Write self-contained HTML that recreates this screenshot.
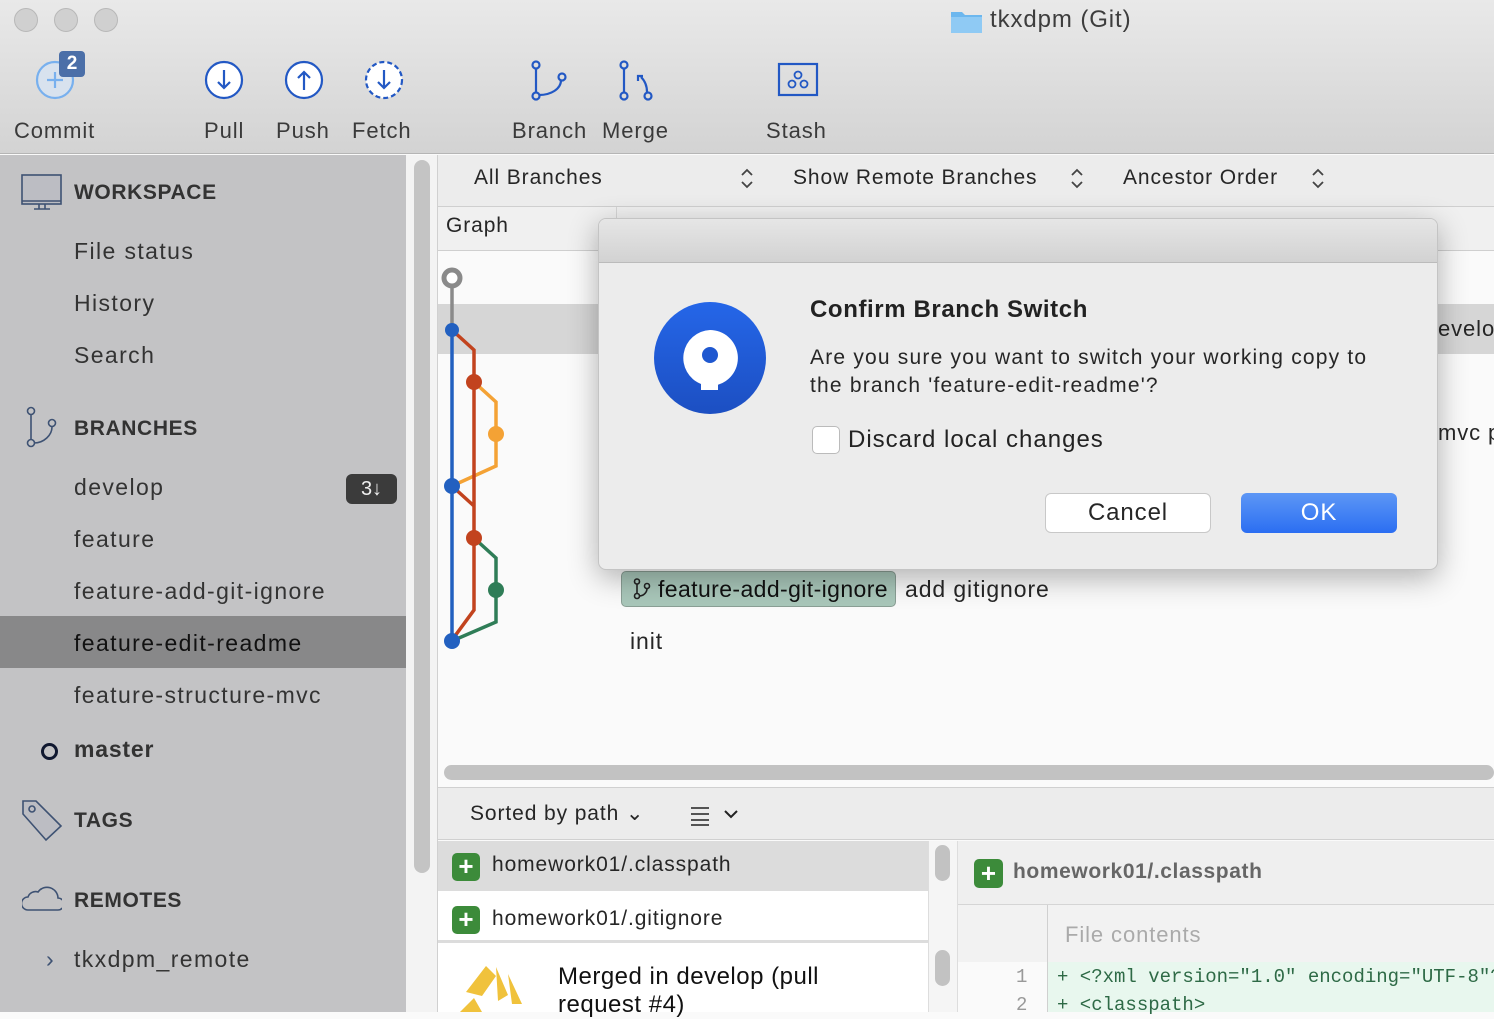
<!DOCTYPE html>
<html><head><meta charset="utf-8"><style>
*{box-sizing:border-box;margin:0;padding:0}
body{width:1494px;height:1012px;overflow:hidden;font-family:"Liberation Sans",sans-serif;background:#fafafa;position:relative;color:#262626;letter-spacing:.9px}
.abs{position:absolute;white-space:nowrap}
#top{left:0;top:0;width:1494px;height:154px;background:linear-gradient(#e9e9e9,#d3d3d3);border-bottom:1px solid #b5b5b5}
.dot{width:24px;height:24px;border-radius:50%;background:#d0d0d0;border:1px solid #b8b8b8;top:8px}
.tl{font-size:22px;color:#3a3a3a;top:118px}
#side{left:0;top:155px;width:406px;height:857px;background:#c3c3c5}
.si{font-size:23px;color:#333;left:74px;letter-spacing:1.4px}
.hd{font-weight:bold;font-size:21px;color:#333;left:74px;letter-spacing:.6px}
</style></head><body>
<div id="top" class="abs"></div>
<div class="abs dot" style="left:14px"></div><div class="abs dot" style="left:54px"></div><div class="abs dot" style="left:94px"></div>
<svg class="abs" style="left:950px;top:8px" width="34" height="26"><path d="M1 4h11l3 3h17v18H1z" fill="#6cb7ee"/><path d="M1 9h31v16H1z" fill="#8fcaf4"/></svg>
<div class="abs" style="left:990px;top:6px;font-size:24px;color:#3d3d3d">tkxdpm (Git)</div>
<svg class="abs" style="left:0;top:45px" width="840" height="65" fill="none" stroke="#2258c4" stroke-width="2.2">
<circle cx="55" cy="35" r="18" stroke="#78b0ee" fill="#d8e2ee"/><path d="M55 27v16M47 35h16" stroke="#78b0ee"/>
<circle cx="224" cy="35" r="18" fill="#fff"/><path d="M224 25v18M218 37l6 6 6-6"/>
<circle cx="304" cy="35" r="18" fill="#fff"/><path d="M304 45v-18M298 33l6-6 6 6"/>
<circle cx="384" cy="35" r="18" fill="#fff" stroke-dasharray="5 3"/><path d="M384 25v18M378 37l6 6 6-6"/>
<circle cx="536" cy="20" r="3.5"/><circle cx="536" cy="51" r="3.5"/><circle cx="562" cy="32" r="3.5"/><path d="M536 24v23M539 50c12 0 22-6 22-15"/>
<circle cx="624" cy="20" r="3.5"/><circle cx="624" cy="51" r="3.5"/><circle cx="648" cy="51" r="3.5"/><path d="M624 24v23M647 47c0-7-3-12-6-15M638 36v-5h5"/>
<rect x="779" y="19" width="38" height="31"/><circle cx="798" cy="30" r="3.5" stroke-width="1.8"/><circle cx="792" cy="39" r="3.5" stroke-width="1.8"/><circle cx="804" cy="39" r="3.5" stroke-width="1.8"/>
</svg>
<div class="abs" style="left:59px;top:51px;width:26px;height:26px;border-radius:4px;background:#4b6fa8;color:#fff;font-weight:bold;font-size:19px;text-align:center;line-height:26px;letter-spacing:0">2</div>
<div class="abs tl" style="left:14px">Commit</div><div class="abs tl" style="left:204px">Pull</div><div class="abs tl" style="left:276px">Push</div><div class="abs tl" style="left:352px">Fetch</div><div class="abs tl" style="left:512px">Branch</div><div class="abs tl" style="left:602px">Merge</div><div class="abs tl" style="left:766px">Stash</div>

<div id="side" class="abs"></div>
<svg class="abs" style="left:20px;top:172px" width="44" height="40" fill="none" stroke="#3e5273" stroke-width="1.6"><rect x="2" y="3" width="39" height="29" fill="#bcbdc3"/><path d="M2 29h39M14 37h16M19 32v5M25 32v5"/></svg>
<div class="abs hd" style="top:181px">WORKSPACE</div>
<div class="abs si" style="top:238px">File status</div><div class="abs si" style="top:290px">History</div><div class="abs si" style="top:342px">Search</div>
<svg class="abs" style="left:22px;top:405px" width="40" height="45" fill="none" stroke="#3e5273" stroke-width="1.6"><circle cx="9" cy="6" r="3.5"/><circle cx="9" cy="38" r="3.5"/><circle cx="30" cy="18" r="3.5"/><path d="M9 10v24M12 38c10 0 18-8 18-16"/></svg>
<div class="abs hd" style="top:417px">BRANCHES</div>
<div class="abs si" style="top:474px">develop</div>
<div class="abs" style="left:346px;top:474px;width:51px;height:30px;border-radius:6px;background:#3b3b3b;color:#eee;font-size:20px;text-align:center;line-height:30px;letter-spacing:0">3↓</div>
<div class="abs si" style="top:526px">feature</div><div class="abs si" style="top:578px">feature-add-git-ignore</div>
<div class="abs" style="left:0;top:616px;width:406px;height:52px;background:#888889"></div>
<div class="abs si" style="top:630px;color:#111">feature-edit-readme</div>
<div class="abs si" style="top:682px">feature-structure-mvc</div>
<div class="abs" style="left:41px;top:743px;width:17px;height:17px;border-radius:50%;border:3.5px solid #101830"></div>
<div class="abs si" style="top:736px;font-weight:bold;letter-spacing:.8px">master</div>
<svg class="abs" style="left:20px;top:798px" width="44" height="44" fill="none" stroke="#3e5273" stroke-width="1.6"><path d="M3 3h13l25 25-15 14L3 16z" fill="#bcbdc3"/><circle cx="12" cy="11" r="3"/></svg>
<div class="abs hd" style="top:809px">TAGS</div>
<svg class="abs" style="left:22px;top:884px" width="40" height="30" fill="none" stroke="#3e5273" stroke-width="1.6"><path d="M6 26h30a6 6 0 0 0 0-12 11 11 0 0 0-20-6 8 8 0 0 0-10 5 6.5 6.5 0 0 0 0 13z"/></svg>
<div class="abs hd" style="top:889px">REMOTES</div>
<div class="abs si" style="left:46px;top:946px;color:#3e5273">›</div>
<div class="abs si" style="top:946px">tkxdpm_remote</div>

<div class="abs" style="left:406px;top:155px;width:32px;height:857px;background:#f3f3f3;border-right:1px solid #d0d0d0"></div>
<div class="abs" style="left:414px;top:160px;width:16px;height:713px;border-radius:8px;background:#c4c4c4"></div>

<div class="abs" style="left:438px;top:155px;width:1056px;height:52px;background:#ececec;border-bottom:1px solid #cfcfcf"></div>
<div class="abs" style="left:474px;top:166px;font-size:21px">All Branches</div>
<div class="abs" style="left:793px;top:166px;font-size:21px">Show Remote Branches</div>
<div class="abs" style="left:1123px;top:166px;font-size:21px">Ancestor Order</div>
<svg class="abs" style="left:738px;top:166px" width="600" height="26" fill="none" stroke="#444" stroke-width="1.8"><path d="M4 9l5-5 5 5M4 16l5 5 5-5M334 9l5-5 5 5M334 16l5 5 5-5M575 9l5-5 5 5M575 16l5 5 5-5"/></svg>
<div class="abs" style="left:438px;top:207px;width:1056px;height:44px;background:#f0f0f0;border-bottom:1px solid #cfcfcf"></div>
<div class="abs" style="left:616px;top:207px;width:1px;height:44px;background:#d5d5d5"></div>
<div class="abs" style="left:446px;top:214px;font-size:21px">Graph</div>
<div class="abs" style="left:438px;top:251px;width:1056px;height:510px;background:#fafafa"></div>
<div class="abs" style="left:438px;top:304px;width:1056px;height:50px;background:#d6d6d6"></div>
<div class="abs" style="left:1438px;top:316px;font-size:22px">evelo</div>
<div class="abs" style="left:1438px;top:420px;font-size:22px">mvc p</div>
<svg class="abs" style="left:438px;top:251px" width="80" height="410" fill="none" stroke-width="3.5">
<path d="M36 131l22 20v64l-44 20" stroke="#f4a235"/>
<path d="M36 287l22 20v64l-44 19" stroke="#2f7d57"/>
<path d="M14 79l22 20v260l-22 30M14 235l22 20" stroke="#c2431e"/>
<path d="M14 28v50" stroke="#8a8a8a"/>
<path d="M14 78v312" stroke="#2260c0"/>
<circle cx="14" cy="27" r="8" fill="#fff" stroke="#8a8a8a" stroke-width="5"/>
<g stroke="none"><circle cx="14" cy="79" r="7" fill="#2260c0"/><circle cx="14" cy="235" r="8" fill="#2260c0"/><circle cx="14" cy="390" r="8" fill="#2260c0"/>
<circle cx="36" cy="131" r="8" fill="#c2431e"/><circle cx="36" cy="287" r="8" fill="#c2431e"/><circle cx="58" cy="183" r="8" fill="#f4a235"/><circle cx="58" cy="339" r="8" fill="#2f7d57"/></g></svg>
<div class="abs" style="left:621px;top:571px;width:275px;height:36px;border-radius:5px;background:#a9c7ba;border:1px solid #8a9f95"></div>
<svg class="abs" style="left:632px;top:578px" width="20" height="22" fill="none" stroke="#222" stroke-width="1.6"><circle cx="5" cy="3.5" r="2.5"/><circle cx="5" cy="18" r="2.5"/><circle cx="15" cy="8" r="2.5"/><path d="M5 6v9.5M7 18c5 0 8-4 8-7.5"/></svg>
<div class="abs" style="left:658px;top:576px;font-size:23px;color:#111;letter-spacing:.4px">feature-add-git-ignore</div>
<div class="abs" style="left:905px;top:576px;font-size:23px">add gitignore</div>
<div class="abs" style="left:630px;top:628px;font-size:23px">init</div>
<div class="abs" style="left:444px;top:765px;width:1050px;height:15px;border-radius:8px;background:#c2c2c2"></div>
<div class="abs" style="left:438px;top:787px;width:1056px;height:53px;background:#ececec;border-top:1px solid #d0d0d0;border-bottom:1px solid #d0d0d0"></div>
<div class="abs" style="left:470px;top:801px;font-size:21px">Sorted by path ⌄</div>
<svg class="abs" style="left:690px;top:804px" width="50" height="22" fill="none" stroke="#222" stroke-width="2"><path d="M1 4h18M1 10h18M1 16h18M1 21h18" stroke-width="1.6"/><path d="M35 7l6 6 6-6"/></svg>
<div class="abs" style="left:438px;top:841px;width:490px;height:171px;background:#fff"></div>
<div class="abs" style="left:438px;top:841px;width:490px;height:50px;background:#dcdcdc"></div>
<div class="abs" style="left:438px;top:940px;width:490px;height:3px;background:#dcdcdc"></div>
<div class="abs" style="left:928px;top:841px;width:30px;height:171px;background:#f5f5f5;border-left:1px solid #ddd;border-right:1px solid #ddd"></div>
<div class="abs" style="left:935px;top:845px;width:15px;height:36px;border-radius:8px;background:#c2c2c2"></div>
<div class="abs" style="left:935px;top:950px;width:15px;height:36px;border-radius:8px;background:#c2c2c2"></div>
<div class="abs" style="left:452px;top:853px;width:28px;height:28px;border-radius:5px;background:#3c8b3a;color:#fff;font-size:26px;font-weight:bold;text-align:center;line-height:27px;letter-spacing:0">+</div>
<div class="abs" style="left:452px;top:906px;width:28px;height:28px;border-radius:5px;background:#3c8b3a;color:#fff;font-size:26px;font-weight:bold;text-align:center;line-height:27px;letter-spacing:0">+</div>
<div class="abs" style="left:492px;top:853px;font-size:21px">homework01/.classpath</div>
<div class="abs" style="left:492px;top:907px;font-size:21px">homework01/.gitignore</div>
<svg class="abs" style="left:456px;top:962px" width="84" height="50"><path d="M10 30l20-26 10 10-14 20zM40 5l12 28-10 6zM4 50l14-14 8 14zM52 12l14 30-10 0z" fill="#f0c23c"/></svg>
<div class="abs" style="left:558px;top:963px;font-size:24px;line-height:28px;color:#111;letter-spacing:.5px">Merged in develop (pull<br>request #4)</div>
<div class="abs" style="left:958px;top:841px;width:536px;height:64px;background:#efefef;border-bottom:1px solid #d5d5d5"></div>
<div class="abs" style="left:974px;top:859px;width:29px;height:29px;border-radius:5px;background:#3c8b3a;color:#fff;font-size:26px;font-weight:bold;text-align:center;line-height:28px;letter-spacing:0">+</div>
<div class="abs" style="left:1013px;top:860px;font-size:21px;font-weight:bold;color:#666;letter-spacing:.6px">homework01/.classpath</div>
<div class="abs" style="left:958px;top:905px;width:536px;height:57px;background:#f2f2f2"></div>
<div class="abs" style="left:1047px;top:905px;width:1px;height:107px;background:#d0d0d0"></div>
<div class="abs" style="left:1065px;top:922px;font-size:22px;color:#aaa">File contents</div>
<div class="abs" style="left:1048px;top:962px;width:446px;height:50px;background:#e8f7ee"></div>
<div class="abs" style="left:1016px;top:963px;font-family:'Liberation Mono',monospace;font-size:19px;color:#999;line-height:28px;letter-spacing:0">1<br>2</div>
<div class="abs" style="left:1057px;top:963px;font-family:'Liberation Mono',monospace;font-size:19px;color:#2e6a46;line-height:28px;white-space:pre;letter-spacing:0">+ &lt;?xml version="1.0" encoding="UTF-8"?&gt;
+ &lt;classpath&gt;</div>

<div class="abs" style="left:598px;top:218px;width:840px;height:352px;border-radius:8px;background:#ececec;box-shadow:0 8px 30px rgba(0,0,0,.3);border:1px solid #c4c4c4;overflow:hidden">
<div style="height:44px;background:linear-gradient(#e6e6e6,#d2d2d2);border-bottom:1px solid #bbb"></div></div>
<svg class="abs" style="left:652px;top:300px" width="116" height="116"><defs><linearGradient id="g" x1="0" y1="0" x2="0" y2="1"><stop offset="0" stop-color="#2566e8"/><stop offset="1" stop-color="#1c4fc2"/></linearGradient></defs><circle cx="58" cy="58" r="56" fill="url(#g)"/><path d="M58 30a28 28 0 0 1 8 54.8V90H49V84A28 28 0 0 1 58 30z" fill="#fff"/><circle cx="58" cy="55" r="8" fill="#1f58d0"/></svg>
<div class="abs" style="left:810px;top:296px;font-size:24px;font-weight:bold;color:#222;letter-spacing:.6px">Confirm Branch Switch</div>
<div class="abs" style="left:810px;top:344px;font-size:21px;line-height:28px;color:#262626;letter-spacing:1.2px">Are you sure you want to switch your working copy to<br>the branch 'feature-edit-readme'?</div>
<div class="abs" style="left:812px;top:426px;width:28px;height:28px;border-radius:5px;background:#fff;border:1px solid #bbb"></div>
<div class="abs" style="left:848px;top:426px;font-size:24px;color:#222;letter-spacing:1px">Discard local changes</div>
<div class="abs" style="left:1045px;top:493px;width:166px;height:40px;border-radius:6px;background:#fff;border:1px solid #c8c8c8;font-size:24px;text-align:center;line-height:38px">Cancel</div>
<div class="abs" style="left:1241px;top:493px;width:156px;height:40px;border-radius:6px;background:linear-gradient(#5d97f5,#2b6ef2);color:#fff;font-size:24px;text-align:center;line-height:40px">OK</div>
</body></html>
